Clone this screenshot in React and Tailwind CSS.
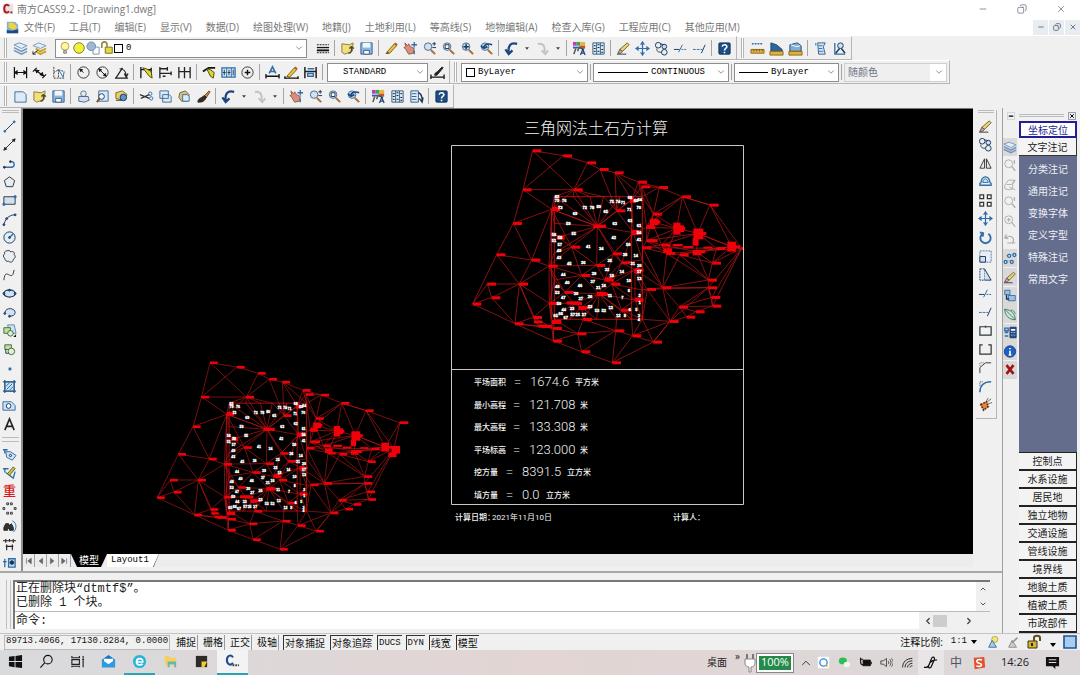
import { useState } from "react";
import { ChevronDown, ChevronUp, ChevronLeft, ChevronRight, Minus, X, Copy } from "lucide-react";

const NAVY = "#1c3557";
const BLUE = "#2f6ea8";
const PALE = "#cfe2f4";

const cjk = "font-['Open_Sans','Noto_Sans_CJK_SC',sans-serif]";
const mono = "font-['Liberation_Mono','Noto_Sans_CJK_SC',monospace]";

const lens = (
  <>
    <circle cx="6.5" cy="6" r="4" fill={PALE} stroke="#4a6788" />
    <path d="M9.5 9.5 14 14" stroke="#a8713f" strokeWidth="2.2" />
  </>
);

const pencil = (
  <>
    <path d="M3 12 11 3l2.5 2L6 13z" fill="#e9c63f" stroke="#7b5a1c" />
    <path d="M11 3l1-1.5 2.5 2-1 1.5z" fill="#b34a3a" stroke="none" />
  </>
);

// every drawing is on a 16 x 16 grid
const icons = {
  layers: <><path d="M1 4l6-2 8 3-6 3z" fill="#e4eef9" stroke="#6f93bb" /><path d="M1 7l8 4 6-3M1 10l8 4 6-3" stroke="#6f93bb" strokeWidth="1.6" /></>,
  layersEdit: <><path d="M1 5l6-3 8 3-6 3z" fill="#e4eef9" stroke="#7d99b5" /><path d="M4 8l5 3 6-3M4 11l5 3 6-3" stroke="#c6a52a" strokeWidth="2" /><path d="M1 14l5-4M1 14h3M1 14v-3" stroke="#222" /></>,
  bulb: <><circle cx="8" cy="6" r="4.5" fill="#fff6a0" stroke="#a39b40" /><path d="M6.5 11h3v3h-3z" fill="#ccc" stroke="#777" /></>,
  sun: <circle cx="8" cy="8" r="6" fill="#f5f03c" stroke="#6c7220" />,
  freeze: <><path d="M8 7h7v8H8z" fill="#fff" stroke="#6b8db0" /><circle cx="6" cy="6" r="5" fill="#9db8d0" stroke="#6c8ba8" /></>,
  unlock: <><path d="M6 7h8v7H6z" fill="#e3da3b" stroke="#6d691e" /><path d="M8 7V4a3 3 0 0 0-6 0v4" stroke="#8d8a2e" strokeWidth="1.8" /></>,
  linetype: <><path d="M2 4h13M2 12.500h13" stroke="#111" strokeDasharray="2 1" /><path d="M2 7h13" stroke="#111" strokeWidth="1.400" /><path d="M2 10h13" stroke="#111" strokeWidth="2" /></>,
  open: <><path d="M2 3l8 1 4-2-1 9-8 3-3-2z" fill="#f3df7d" stroke="#8b7a35" /><path d="M9 13c3 0 4-3 3-6M10 8l2-2 3 2" stroke="#4c4c2c" strokeWidth="1.500" /></>,
  save: <><path d="M2 2h12v12H2z" fill="#8fb8de" stroke="#345f8d" /><path d="M4 2h8v5H4z" fill="#f1f6fb" stroke="none" /><path d="M5 10h6v4H5z" fill="#fff" stroke="#345f8d" /></>,
  newFile: <path d="M2 3h9l3 3v8H2z" fill="#dcebf8" stroke="#3c6d99" />,
  matchprop: <><path d="M2 13c4 1 4-2 6-3" stroke="#7a4a1c" strokeWidth="1.500" />{pencil}</>,
  hand: <><path d="M2 2l3 3 1-2 2 3 4 2-1 5-5 1-3-5-2-2 2-1z" fill="#d88f80" stroke="#9b5548" /><path d="M12 1v6M9 4h6M12 10v4" stroke={BLUE} strokeWidth="1.400" /></>,
  zoomRt: <>{lens}<path d="M11 3h4M13 1v4M11 7h4" stroke={NAVY} /></>,
  zoomWin: <>{lens}<path d="M4.500 4h4v4h-4z" fill="#fff" stroke={NAVY} /></>,
  zoomAll: <>{lens}<path d="M6.500 3v6M3.500 6h6" stroke={NAVY} strokeWidth="1.600" /></>,
  zoomPrev: <>{lens}<path d="M5 8C5 4 9 2 14 4M5 8 2 5M5 8l4-2" stroke="#174a86" strokeWidth="1.800" /></>,
  undo: <path d="M14 3C7 1 4 5 5 13M1.500 9 5 14l4-4" stroke="#1c4680" strokeWidth="2.400" />,
  redo: <path d="M3 3c7-1 8 4 7 10M7 10l4 4 3-4" stroke="#c2c2c2" strokeWidth="2" />,
  props: <><path d="M1 1h4v4H1z" fill="#c43bb6" stroke="none" /><path d="M5 1h4v4H5z" fill="#36a853" stroke="none" /><path d="M9 1h5v4H9z" fill="#e2b93d" stroke="none" /><path d="M1 6h7v2H1z" fill="#2f5fbf" stroke="none" /><path d="M8 5h6v3H8z" fill="#c9502f" stroke="none" /><path d="M4 8l-2 6M7 8l-1 3M7 7l6 2" stroke="#555" strokeWidth="1.600" /><path d="M9 15l2.500-6 2.500 6M10 13h3" stroke="#1c4680" strokeWidth="1.300" /></>,
  grid: <><path d="M2 2h12v12H2z" fill="#e2eef9" stroke="#2c5c88" /><path d="M6 2v12M10 2v12" stroke="#2c5c88" /><path d="M3 5h2M3 8h2M3 11h2M7 4h2M7 7h2M7 11h2M11 5h2M11 9h2M11 12h2" stroke="#111" /></>,
  palette: <><path d="M2 2h8v12H2z" fill="#e2eef9" stroke="#2c5c88" /><path d="M3 5h5M3 8h5M3 11h5" stroke="#2c5c88" /><path d="M10 4c3 1 4 3 4 8M11 10l3 4 1-5" stroke={NAVY} strokeWidth="1.500" /></>,
  erase: <><path d="M4 9 12 2l2 2-7 7z" fill="#f0d56c" stroke="#665c38" /><path d="M4 9l3 2-2 2H2z" fill="#e4a4a4" stroke="#555" /><path d="M1 14h10" stroke="#333" /></>,
  move: <path d="M8 2v12M2 8h12M6 4l2-3 2 3M6 12l2 3 2-3M4 6 1 8l3 2M12 6l3 2-3 2" stroke={BLUE} strokeWidth="1.300" />,
  copyObj: <><circle cx="4.500" cy="4.500" r="3" fill="#e8eef4" /><circle cx="11" cy="6" r="2.500" fill={PALE} /><circle cx="11" cy="12" r="3" fill="#e8eef4" /><path d="M3 8c0 3 1 4 5 4M7 3l4 1" /></>,
  trim: <><path d="M1 9h6" stroke={NAVY} /><path d="M9 9h6" strokeDasharray="2 1" stroke={BLUE} /><path d="M6 12l4-8" stroke={BLUE} /></>,
  extend: <><path d="M1 9h10" strokeDasharray="3 1" stroke={BLUE} /><path d="M10 13l4-9" stroke={NAVY} /></>,
  help: <><rect x="2" y="2" width="12" height="12" rx="1" fill="#1d4d84" stroke="#0e3159" /><path d="M5.500 6C6 3 11 3.500 10.500 6.500 10 8 8 8 8 10M8 11.500v1.500" stroke="#fff" strokeWidth="1.700" /></>,
  dist: <><path d="M2 3h12" strokeDasharray="2 1" stroke={BLUE} strokeWidth="1.600" /><path d="M1 9h14v4H1z" fill="#e0b13e" stroke="#8b6719" /><path d="M4 9v2M7 9v2M10 9v2M13 9v2" stroke="#6e4d0c" /></>,
  area: <><path d="M2 2l6 2 6 5v2H2z" fill="#2d669b" stroke="#1b4a78" /><path d="M1 11h14v4H1z" fill="#e0b13e" stroke="#8b6719" /></>,
  massprop: <><path d="M2 4l8-2 4 3v6H2z" fill="#82aed4" stroke="#1b4a78" /><path d="M3 4l6 2 4-1" stroke="#fff" /><path d="M1 11h14v4H1z" fill="#e0b13e" stroke="#8b6719" /></>,
  list: <><path d="M5 2h8l-2 4 2 8H6z" fill="#d6e6f5" stroke="#345f8d" /><path d="M6 5h4M6 8h4M6 11h5M3 2v3" stroke={BLUE} /></>,
  locate: <><path d="M3 2v12h11" stroke={BLUE} strokeWidth="1.400" /><circle cx="9" cy="5" r="3" fill={PALE} /><path d="M8 8l-4 5M10 8l4 5" stroke={NAVY} strokeWidth="1.500" /></>,
  dimLin: <path d="M1.500 2v12M14.500 2v12M2 8h12M5 6 2 8l3 2M11 6l3 2-3 2" stroke="#111" strokeWidth="1.300" />,
  dimAli: <path d="M3 5l10 7M1 7l4-4M11 14l4-4M4 5.500l3 0.500-2 2zM12 11.500l-3-1 2-2z" fill="#111" stroke="#111" strokeWidth="1.300" />,
  dimOrd: <><path d="M3 2v12h11M3 8l5-3 6 2M8 5v8" stroke="#333" strokeDasharray="2 1" /><path d="M8 5l5 8 1-6" stroke={BLUE} /></>,
  radius: <><circle cx="8" cy="8" r="6" stroke="#333" /><path d="M8 8 4.500 5M4 4.500l3 0.500-2 2z" fill="#111" stroke="#111" /></>,
  diameter: <><circle cx="8" cy="8" r="6" stroke="#333" /><path d="M4 4l8 8M4 4l3 1-2 2zM12 12l-3-1 2-2z" fill="#111" stroke="#111" /></>,
  angle: <path d="M1 14h14M2 14 9 3M6 4c5 0 7 4 7 8M11 9l2 4 2-4" stroke="#222" strokeWidth="1.300" />,
  qdim: <><path d="M2 2v12M13 3v10M2 5h11" stroke="#111" strokeWidth="1.400" /><path d="M4 3l7 9 3 2-1-7-5-3z" fill="#e3d628" stroke="#4c4a14" /></>,
  dimBase: <path d="M2 2v12M2 4h8M2 9h12M10 2v4M14 7v4M5 12h3" stroke="#222" strokeWidth="1.400" />,
  dimCont: <path d="M2 2v12M8 2v12M14 2v12M2 7h12" stroke="#222" strokeWidth="1.400" />,
  qleader: <><path d="M1 7l6-4h7" stroke="#111" strokeWidth="2" /><path d="M5 4l4 8 3 2 1-6-4-3z" fill="#d9d530" stroke="#4c4a14" /></>,
  tolerance: <><path d="M1 3h14v10H1z" fill="#d9e8f5" stroke={BLUE} strokeWidth="1.400" /><path d="M6 3v10M11 3v10" stroke={BLUE} /><path d="M3.500 5v6M2 8h3M8.500 5v6M7 8h3M13 5v6" stroke={NAVY} /></>,
  center: <><circle cx="8" cy="8" r="6" stroke="#333" /><path d="M8 5v6M5 8h6" stroke="#111" strokeWidth="1.500" /></>,
  dimText: <><path d="M4.500 9 8 2l3.500 7M6 7h4" stroke={BLUE} strokeWidth="1.700" /><path d="M1 12h14M1 9.500v5M15 9.500v5" stroke="#111" strokeWidth="1.400" /></>,
  dimEdit: <>{pencil}<path d="M1 14h14M1 12v3M15 12v3" stroke="#111" strokeWidth="1.400" /></>,
  dimUpd: <><path d="M2 2v12M14 2v12M2 7h12" stroke="#222" strokeWidth="1.600" /><path d="M5 4h7M5 9h6v3H5z" stroke={BLUE} strokeWidth="1.500" /></>,
  dimStyle: <><path d="M1 13h14M1 10v5M15 10v5" stroke="#111" strokeWidth="1.400" /><path d="M5 11c0-3 2-3 3-4l5-5 1 1-5 6c-1 2-2 2-4 2z" fill="#222" stroke="#222" /></>,
  print: <><circle cx="8" cy="5" r="3" fill="#e2eaf4" stroke="#5b6f90" /><path d="M3 8h10l1 4-5 2-6-1z" fill="#d6dfee" stroke="#51648a" /></>,
  preview: <><path d="M4 2h10v11H4z" fill="#dcebf8" stroke="#3c6d99" /><circle cx="7" cy="8" r="3" fill="#f4f9fd" stroke={NAVY} /><path d="M5 10l-3 4" stroke="#80501f" strokeWidth="2" /></>,
  publish: <><path d="M2 4l7-2 5 4-5 6-7-2z" fill="#e8cf66" stroke="#7b6a2a" /><circle cx="10" cy="9" r="3.500" fill="#5d94c7" stroke={NAVY} /><path d="M2 12h6" stroke="#333" /></>,
  cut: <><circle cx="13" cy="10" r="1.800" stroke={BLUE} /><circle cx="12" cy="5" r="1.800" stroke={BLUE} /><path d="M1 6l10 4M2 10l9-4" stroke="#333" strokeWidth="1.300" /></>,
  copy: <path d="M2 2h9v8H2zM5 6h7l2 2v6H5z" fill="#dcebf8" stroke="#3c6d99" />,
  paste: <><path d="M3 4l6-2 4 4-2 7H5L2 9z" fill="#d6c181" stroke="#776633" /><path d="M6 6h5l2 2v5H6z" fill="#dcebf8" stroke="#3c6d99" /></>,
  brush: <><path d="M9 7l5-5 1 1-4 6z" fill="#c98a4b" stroke="#6e4420" /><path d="M2 14c0-3 2-4 4-5l3-2 2 2-2 3c-2 2-4 2-7 2z" fill="#3a2a20" stroke="#2a1c14" /></>,
  line: <><path d="M3 13 13 3" /><circle cx="3" cy="13" r="1" fill={BLUE} stroke={BLUE} /><circle cx="13" cy="3" r="1" fill={BLUE} stroke={BLUE} /></>,
  xline: <path d="M2 14 14 2M2 14l1-3 2 2zM14 2l-3 1 2 2z" fill="#222" stroke="#222" />,
  pline: <><path d="M2 12h8c4 0 4-6 0-6" stroke={BLUE} strokeWidth="1.400" /><circle cx="2.500" cy="12" r="1" fill={NAVY} /><circle cx="9" cy="6" r="1" fill={NAVY} /></>,
  polygon: <path d="M8 3l5.500 4-2 6.500h-7l-2-6.500z" fill="#e5edf4" stroke="#333" />,
  rect: <><path d="M2 4h12v8H2z" fill={PALE} stroke="#333" /><path d="M13 3h2v2h-2zM1 11h2v2H1z" fill={BLUE} stroke={BLUE} /></>,
  arc: <><path d="M2 14C3 8 7 3 14 3" /><circle cx="2" cy="13.500" r="1" fill={BLUE} /><circle cx="5" cy="7" r="1" fill={BLUE} /><circle cx="14" cy="3" r="1" fill={BLUE} /></>,
  circle: <><circle cx="8" cy="8" r="6" fill="#e2edf6" /><path d="M8 8l4-4" stroke={BLUE} strokeWidth="1.500" /><circle cx="8" cy="8" r="1" fill={BLUE} /></>,
  cloud: <path d="M5 2c2-1 4 0 4 1 3-1 5 1 4 3 2 2 1 4-1 5 0 3-3 4-5 2-2 1-4-1-4-3C1 9 1 6 3 5c-1-1 0-3 2-3z" fill="#e8eef3" stroke="#333" />,
  spline: <path d="M2 13c1-10 4-6 7-5s3-3 4-6" stroke="#333" />,
  ellipse: <><ellipse cx="8" cy="8" rx="6" ry="3.800" fill={PALE} strokeWidth="1.400" /><circle cx="2" cy="8" r="1" fill={BLUE} /><circle cx="8" cy="4.500" r="1" fill={BLUE} /><circle cx="14" cy="8" r="1" fill={BLUE} /></>,
  ellArc: <><path d="M3 8c1-6 11-5 11 0 0 3-3 4-6 4" fill={PALE} /><circle cx="3" cy="9" r="1" fill={BLUE} /><circle cx="8" cy="12" r="1" fill={BLUE} /></>,
  insert: <><path d="M6 2h7l2 9H8z" fill={PALE} stroke="#5d87ad" /><path d="M2 5h7v6H2z" fill="#c3deaa" stroke="#3c7030" /><circle cx="9" cy="11" r="3" fill="#dcead0" stroke="#3c6a30" /><path d="M15 15h-3l3-3z" fill="#111" stroke="none" /></>,
  block: <><path d="M3 3h7v5H3z" fill="#c3deaa" stroke="#3c7030" /><circle cx="10" cy="10" r="3.500" fill="#e2eeda" stroke="#3c6a30" /><path d="M4 8v4h3" /></>,
  point: <path d="M7 7h3v3H7z" fill={BLUE} stroke="none" />,
  hatch: <><path d="M3 3h10v10H3z" fill="#c9dff2" stroke={BLUE} /><path d="M1 3h14M1 13h14M3 1v14M13 1v14" stroke="#2b5984" strokeWidth="1.300" /><path d="M5 11l6-6M4 8l4-4M8 12l4-4" stroke={BLUE} /></>,
  region: <><path d="M1 4h9l4 4v5H1z" fill={PALE} stroke={BLUE} /><circle cx="7" cy="8.500" r="2.500" fill="#fff" stroke={NAVY} /></>,
  mtext: <path d="M3 14 8 2l5 12M5 10h6" stroke="#222" strokeWidth="1.700" />,
  tag: <><path d="M1 3h5M3 3v4" stroke={BLUE} strokeWidth="1.500" /><path d="M4 5h5l6 4-4 5-6-3z" fill={PALE} stroke={BLUE} /><circle cx="9" cy="9" r="1.200" /></>,
  tagEdit: <><path d="M1 4h6M3 4v4M4 8l8 6 2-7" stroke={BLUE} strokeWidth="1.400" /><path d="M6 9l6-7 2 2-6 7z" fill="#e4b93a" stroke="#3c6d30" /></>,
  ring: <path d="M5 2h2v2H5zM9 2h2v2H9zM13 7h2v2h-2zM9 12h2v2H9zM5 12h2v2H5zM1 7h2v2H1z" stroke="#333" />,
  find: <><path d="M2 9l2-4h3l1 2 2-2 2 4v3H8v-2H6v2H2z" fill="#333" stroke="#222" /><path d="M11 2c5 2 5 9 1 12" stroke={BLUE} /></>,
  span: <path d="M1 4h14M4 2v4M12 2v4M8 2v3M4 10h8M5 8v6M11 8v6" stroke="#222" strokeWidth="1.200" />,
  tb: <><path d="M1 7h4M3 4v9M7 4h7v9H7z" fill={PALE} stroke={BLUE} strokeWidth="1.400" /><circle cx="10.500" cy="8" r="2" fill={NAVY} /></>,
  mirror: <><path d="M7 3v10H2zM9 3v10h5z" fill="#e5edf4" stroke="#333" /></>,
  offset: <><path d="M2 12h12v-2c-2 0-1-2-2-4-2-4-6-4-8 0-1 2 0 4-2 4z" stroke={BLUE} strokeWidth="1.400" /><path d="M5 9h6c-1-5-5-5-6 0z" fill={PALE} stroke={BLUE} /></>,
  array: <path d="M2 2h4v4H2zM10 2h4v4h-4zM2 10h4v4H2zM10 10h4v4h-4z" fill="#eef3f7" stroke="#333" strokeWidth="1.300" />,
  rotate: <path d="M5 4a5.500 5.500 0 1 0 6 0M2 2.500 5.500 3.500 5 7" stroke={BLUE} strokeWidth="2" />,
  scale: <><path d="M2 2h12v12H2z" fill="#e6eff7" stroke="#54789a" strokeDasharray="2 1" /><path d="M2 8h6v6H2z" fill={PALE} /></>,
  stretch: <><path d="M2 2h5v12H2z" fill="#e6eff7" strokeDasharray="2 1" /><path d="M7 2l7 12H7" fill={PALE} /></>,
  brk: <path d="M2 4h12v9H2zM8 3v2" fill="#eef3f7" stroke="#333" strokeWidth="1.300" />,
  brk2: <path d="M5 3H2v10h12V3h-3" stroke="#333" strokeWidth="1.300" />,
  chamfer: <><path d="M2 14V8l6-5h6" stroke="#333" /><path d="M2 6V3h4" stroke={BLUE} strokeDasharray="1 1" /></>,
  fillet: <><path d="M2 14C2 7 6 3 14 3" stroke={BLUE} strokeWidth="1.600" /><path d="M2 7V3h4" stroke="#333" strokeDasharray="1 1" /></>,
  explode: <><path d="M3 8l6-3 2 5-5 4z" fill="#e08a42" stroke="#712c10" strokeDasharray="2 1" strokeWidth="1.800" /><path d="M10 5l4-3M11 7l4-1M9 4l2-3" stroke="#666" /></>,
  mail: <><path d="M1 6l7-5 7 5v8H1z" fill="#1277c5" stroke="none" /><path d="M3 5h10v3l-5 4-5-4z" fill="#fff" stroke="none" /><path d="M1 6l7 5 7-5v8H1z" fill="#2a9be4" stroke="none" /></>,
  gZoom: <><circle cx="6.500" cy="6" r="4.500" stroke="#aaa" /><path d="M10 9l4 5M13 2v4" stroke="#aaa" strokeWidth="1.500" /></>,
  gZoomIn: <><circle cx="6.500" cy="6" r="4.500" stroke="#aaa" /><path d="M10 9l4 5M6.500 4v4M4.500 6h4" stroke="#aaa" strokeWidth="1.300" /></>,
  gHand: <path d="M2 9l4-6h8l-3 5v5l-4 1-5-1zM4 8l6 0M10 8l3-5M7 11l7 3" stroke="#aaa" />,
  gUndo: <path d="M4 2 2 6l4 1M3 6c6-4 11 0 8 6M5 12h9" stroke="#aaa" strokeWidth="1.300" />,
  nodes: <><path d="M3 5l5-2 5 1M3 12l5-2 5 2" stroke="#9cb8d3" /><g fill="#fff" stroke={BLUE} strokeWidth="1.500"><circle cx="3" cy="12" r="1.700" /><circle cx="7" cy="5" r="1.700" /><circle cx="13" cy="4" r="1.700" /><circle cx="10" cy="12" r="1.700" /></g></>,
  swap: <><path d="M2 2h6v5H2zM6 8h8v6H6z" fill="#9fc0de" stroke={BLUE} /><path d="M4 7v5h3" stroke={NAVY} strokeWidth="1.500" /></>,
  leaf: <path d="M2 2c4 0 12 3 12 12C7 14 2 9 2 2zM2 2l12 12M9 3c3 0 4 2 5 4" fill="#cfe6d8" stroke="#33755c" />,
  calc: <><path d="M8 2h7v12H8z" fill="#234c93" stroke={NAVY} /><path d="M9 4h5v2H9z" fill="#fff" stroke="none" /><path d="M9 8h5M9 11h5" stroke="#cfe2f4" strokeDasharray="1 1" /><path d="M2 3h4v3H2zM2 8h4M2 12h4" stroke={BLUE} strokeWidth="1.500" /></>,
  info: <><circle cx="8" cy="8" r="6.500" fill="#1f5fc4" stroke="#123e87" /><path d="M8 4v1.500M8 7v5M6.500 12h3" stroke="#fff" strokeWidth="1.900" /></>,
  del: <path d="M4 3l8 10M12 3 4 13" stroke="#a01414" strokeWidth="3" />,
  person: <><circle cx="10" cy="5" r="3.500" fill="#f3e57a" stroke="#b6a63b" /><path d="M3 14l4-8 5 8z" fill="#a9c8e4" stroke={BLUE} /></>,
  personGray: <><path d="M3 14l4-8 5 8z" fill="#ccc" stroke="#888" /><path d="M7 9l6-6" stroke="#999" strokeWidth="2" /></>,
  lock: <><path d="M2 7h9v7H2z" fill="#d7b62e" stroke="#3d3510" /><path d="M8 7V4c0-3 6-3 6 0v3" stroke="#5a4e18" strokeWidth="2" /><path d="M6 9v3" stroke="#222" strokeWidth="2" /></>,
  screen: <path d="M2 2h12v12H2z" fill="#a9cdf0" stroke="#1f5390" strokeWidth="1.600" />,
  windows: <path d="M1 3l6-1v5.500H1zM8 2l7-1v6.500H8zM1 8.500h6V14l-6-1zM8 8.500h7V15l-7-1z" fill="#111" stroke="none" />,
  search: <><circle cx="9.500" cy="6" r="4.500" stroke="#111" strokeWidth="1.200" /><path d="M6 9.500 1.500 14.500" stroke="#111" strokeWidth="1.200" /></>,
  taskview: <path d="M2 2v2h8V2M2 6h8v5H2zM2 14v-1h8v1M14 2v3M14 7v7M13 6h2" stroke="#222" strokeWidth="1.200" />,
  edge: <><circle cx="8" cy="8" r="7" fill="#27b5dd" stroke="none" /><path d="M4.500 8.500h7C12 4 5 3.500 4.800 8.500c0 4 5 3.500 6.500 2" stroke="#fff" strokeWidth="1.800" /></>,
  folder: <><path d="M2 2h5l1 2h6v8H2z" fill="#f5cf62" stroke="none" /><path d="M5 8h9v6h-2v-3H7v3H5z" fill="#65b7a9" stroke="none" /></>,
  note: <><path d="M2 2h12v12H2z" fill="#2d2b2a" stroke="none" /><path d="M8 8h6l-3 6H8z" fill="#f2cc2c" stroke="none" /></>,
  cass: <><path d="M8.500 3.500C6 0 2 2 2 6.500s4 6.500 6.500 3" stroke="#1c4c94" strokeWidth="2.200" /><path d="M8 12h7" stroke="#444" strokeWidth="2" strokeDasharray="2 1" /></>,
  cassRed: <><rect x="1" y="1" width="14" height="14" fill="#f4dede" stroke="none" /><path d="M9.500 4C7 1 3 2 3 7.500S7 14 9.500 11" stroke="#a81a1e" strokeWidth="2.600" /><circle cx="12.500" cy="12.500" r="1.500" fill="#555" stroke="none" /></>,
  dwg: <><path d="M1 1h10l4 4v10H1z" fill="#7fb1da" stroke="none" /><path d="M3 2h6l5 5-4 4-7-3z" fill="#f0d23b" stroke="none" /><path d="M1 11l6 1 8-2v5H1z" fill="#1c4b83" stroke="none" /></>,
  qq: <><rect x="1" y="1" width="14" height="14" rx="1" fill="#fff" stroke="none" /><circle cx="8" cy="8" r="4.500" stroke="#2f8ee0" strokeWidth="1.700" /><path d="M11 11l2 2" stroke="#e8a93a" strokeWidth="2" /></>,
  wechat: <><ellipse cx="6" cy="6" rx="5" ry="4.200" fill="#2fbd58" stroke="none" /><ellipse cx="11" cy="10.500" rx="4" ry="3.300" fill="#eef6ee" stroke="none" /></>,
  power: <><path d="M5 5h9v7H5z" fill="#111" stroke="#111" /><path d="M15 7v3M1 4h4M2 2v5M2 7c0 3 1 4 3 4" stroke="#111" strokeWidth="1.400" /></>,
  sound: <path d="M1 6h3l4-3v10l-4-3H1zM10 6c1 1 1 3 0 4M12 4c2 2 2 6 0 8M14 3c3 3 3 7 0 10" stroke="#333" />,
  wifi: <path d="M2 14C2 7 7 3 14 3M5 14c0-5 4-8 9-8M8 14c0-3 3-5 6-5M11 14c0-1 1-2 3-2" stroke="#222" strokeWidth="1.200" />,
  pen: <path d="M1 13c3 1 5-1 6-4l2-5c1-3 4-2 3 1l-3 7c-1 3-4 2-3-1M8 8c2-3 5-2 7-3" stroke="#111" strokeWidth="1.300" />,
  sogou: <><path d="M2 2l12-1 1 12-12 2z" fill="#e3512b" stroke="none" /><path d="M11.500 4.500C8 3.500 5 4.500 5.500 6.500S11 8 11 10s-3 2.500-6 1.500" stroke="#fff" strokeWidth="1.800" /></>,
  chat: <><path d="M1 2h14v10h-4v3l-3-3H1z" fill="#111" stroke="none" /><path d="M4 5h8M4 8h8" stroke="#ddd" strokeWidth="1.200" /></>,
};

function Icon({ name, className = "size-[15px]" }) {
  return (
    <svg viewBox="0 0 16 16" fill="none" stroke={NAVY} className={className} aria-hidden="true">
      {icons[name]}
    </svg>
  );
}

function ToolButton({ name, active }) {
  return (
    <button
      type="button"
      aria-label={name}
      className={`flex h-[18px] w-[19px] shrink-0 items-center justify-center ${active ? "bg-[#d9d9d9]" : ""}`}
    >
      <Icon name={name} />
    </button>
  );
}

// "|" is a separator, "v" the small arrow beside undo and redo
function Tools({ items }) {
  return items.map((item, i) => {
    if (item === "|") return <span key={i} className="ml-0.5 mr-[3px] h-4 w-px shrink-0 bg-[#a5a5a5]" />;
    if (item === "v")
      return (
        <button key={i} type="button" aria-label="more" className="flex w-3 shrink-0 justify-center">
          <svg viewBox="0 0 6 4" className="h-[3px] w-1"><path d="M0 0h6L3 4z" fill="#444" /></svg>
        </button>
      );
    return <ToolButton key={i} name={item} />;
  });
}

function Grip() {
  return <span className="ml-1 mr-1 h-5 w-[3px] shrink-0 border-x border-[#b4b4b4] bg-white" />;
}

function Toolbar({ children }) {
  return <div className="flex h-6 shrink-0 items-center border-b border-r border-[#b5b5b5] border-t border-t-white pr-0.5">{children}</div>;
}

function Combo({ label, value, className, swatch, rule, children, disabled }) {
  return (
    <div className={`relative flex h-[19px] shrink-0 items-center border bg-white ${disabled ? "border-[#cfcfcf] text-gray-500" : "border-[#8c8c8c] text-black"} ${className}`}>
      {children}
      {swatch && <span className="ml-1 size-[9px] shrink-0 border border-black" />}
      {rule && <span className={`ml-1 h-px shrink-0 bg-black ${rule}`} />}
      <select
        aria-label={label}
        disabled={disabled}
        defaultValue={value}
        className={`h-full min-w-0 flex-1 appearance-none pl-[3px] opacity-100 ${disabled ? `mr-4 bg-[#efefef] text-[10px] ${cjk}` : `bg-transparent pt-0.5 text-[9px] ${mono}`}`}
      >
        <option>{value}</option>
      </select>
      <ChevronDown className="pointer-events-none absolute right-0.5 size-[10px] text-gray-600" strokeWidth={1.5} />
    </div>
  );
}

const nodes = [
  [248, 122], [340, 137], [412, 158], [450, 178], [495, 188], [565, 216], [575, 230], [628, 232], [697, 260], [780, 285],
  [875, 415], [372, 239], [219, 239], [190, 340], [140, 434], [68, 582], [112, 522], [125, 563], [208, 522], [245, 450],
  [195, 641], [310, 693], [395, 725], [487, 758], [610, 696], [548, 677], [497, 662], [383, 671], [305, 298], [442, 349],
  [297, 468], [298, 580], [250, 622], [265, 648], [310, 655], [660, 634], [710, 621], [738, 605], [688, 591], [788, 588],
  [785, 562], [775, 533], [775, 510], [787, 459], [638, 533], [592, 538], [610, 312], [605, 335], [680, 355], [743, 370],
  [845, 410], [590, 352], [550, 368], [555, 480], [555, 570], [400, 628], [590, 392], [578, 413], [650, 430], [690, 434],
  [740, 425], [800, 415], [635, 405], [500, 302], [365, 411], [490, 431], [440, 466], [515, 458], [395, 496], [465, 510],
  [485, 522], [448, 552], [345, 547], [370, 580], [395, 592], [515, 600], [325, 382], [545, 270], [313, 260], [577, 260],
  [577, 628], [313, 628], [313, 340], [313, 430], [313, 510], [577, 340], [577, 450], [577, 540], [370, 260], [420, 260],
  [460, 260], [510, 260], [360, 628], [440, 628], [500, 628], [545, 628],
];

// first number is the hub, the rest are the nodes it is joined to
const fans = [
  [0, 1, 11, 12], [1, 2, 12], [2, 3, 11], [3, 4, 11, 63], [4, 5, 63, 77, 79], [5, 6, 7, 77, 79],
  [6, 7, 46, 79, 77], [7, 8, 46, 79], [8, 9, 46, 47, 48, 49], [9, 10, 49, 50, 8], [10, 50, 60, 43, 41, 40, 39],
  [11, 12, 28, 78, 88, 89, 29, 90], [12, 13, 28], [13, 14, 28, 19], [14, 15, 19, 18], [15, 16, 17, 20],
  [16, 17, 18], [17, 18, 20], [18, 19, 30, 31, 20, 33, 32], [19, 28, 30], [20, 21, 32, 33, 34],
  [21, 22, 34, 27, 81, 31], [22, 23, 27, 26], [23, 24, 25, 26], [24, 25, 35, 80], [25, 26, 35, 80, 95],
  [26, 27, 94, 55], [27, 34, 81, 55], [28, 78, 82, 29, 64, 30], [30, 31, 64, 66, 68, 84, 83, 72],
  [31, 32, 34, 72, 73, 84, 81], [32, 33, 34], [33, 34], [35, 24, 36, 38, 44, 45, 80], [36, 37, 38],
  [37, 38, 39], [38, 44, 41, 39], [39, 40, 41], [40, 41, 38], [41, 42, 44, 45, 35], [42, 43, 44, 58, 60, 59],
  [43, 60, 59, 61, 50], [44, 45, 57, 58, 59, 86, 53], [45, 53, 54, 87, 80], [46, 47, 51, 79, 48], [47, 51, 48, 56, 62],
  [48, 49, 56, 62, 51, 58], [49, 50, 60, 62, 61], [50, 60, 61, 49], [51, 52, 56, 79], [56, 57, 62, 58, 49], [57, 62, 58, 86, 61],
  [58, 59, 60, 62], [59, 60], [60, 61, 62], [29, 28, 82, 76, 64, 88, 89, 90, 91, 78, 63, 77, 52, 65, 66, 67, 83],
  [63, 77, 52, 90, 91], [52, 65, 67, 85, 86, 77], [64, 66, 83, 68, 76], [65, 66, 67, 69, 52], [66, 68, 69],
  [67, 53, 69, 70, 86], [68, 69, 71, 72, 84], [69, 70, 71, 53], [70, 71, 53, 54, 75, 87],
  [71, 72, 73, 74, 75, 93, 94, 95, 55, 54], [72, 73, 84], [73, 74, 92, 81], [74, 55, 92, 93], [75, 54, 94, 95, 80], [53, 87, 54], [54, 80, 87],
];

const edgePath = (list) =>
  list.flatMap(([hub, ...ends]) => ends.map((n) => `M${nodes[hub]}L${nodes[n]}`)).join("");

const redExtra = [
  [600, 326, 26, 20], [670, 338, 22, 36], [682, 346, 20, 20], [730, 356, 30, 32], [728, 385, 18, 22], [728, 420, 26, 16],
  [832, 395, 26, 30], [590, 345, 22, 12], [640, 415, 26, 14], [668, 402, 30, 7], [700, 408, 30, 7], [760, 410, 28, 6], [595, 388, 28, 8],
  [306, 630, 28, 12], [252, 632, 26, 8], [275, 645, 30, 9], [306, 290, 22, 13], [430, 344, 38, 10], [320, 376, 24, 13],
  [545, 360, 24, 15], [553, 474, 16, 16], [440, 546, 28, 12], [465, 502, 22, 11], [350, 574, 34, 10], [385, 588, 24, 12], [555, 564, 22, 12], [540, 265, 18, 14],
];

const heights = `321 260 82;321 271 79;343 270 76;331 291 73;404 291 72;426 291 78;446 290 80;375 310 69;467 303 65;485 275 75;504 275 74;519 278 71;540 263 68;558 272 60;569 269 64;538 297 71;566 293 70;355 341 59;494 341 63;540 330 62;567 346 61;371 371 55;491 381 42;567 367 54;567 387 41;312 372 56;312 391 51;330 382 58;329 402 57;327 422 49;327 442 43;415 409 41;454 414 34;535 402 50;525 433 38;557 437 14;358 460 45;400 457 36;479 452 35;548 459 31;568 465 20;568 485 17;568 505 13;471 478 32;515 485 14;485 495 18;340 493 44;352 516 40;390 525 46;428 513 37;432 490 39;461 525 16;445 531 21;536 510 10;537 542 8;322 528 48;322 548 53;378 551 30;340 563 47;392 566 27;420 558 26;480 556 11;517 563 7;569 555 2;569 576 1;327 580 50;341 597 44;366 594 33;420 590 23;441 601 53;461 601 52;482 591 12;540 598 6;559 597 5;317 617 65;332 611 66;347 621 67;368 612 57;383 614 25;402 614 27;505 617 12;525 617 8;567 615 3;567 627 4`
  .split(";")
  .map((row) => row.split(" "));

function Mesh({ transform, tail }) {
  return (
    <g transform={transform}>
      <path d={edgePath(fans)} stroke="#b81616" strokeWidth="2.200" fill="none" />
      <path d="M313 260H577V628H313zM305 300V628M545 260V628" stroke="#e01010" strokeWidth="2.400" fill="none" />
      {tail && <path d="M780 285L895 327L875 415M895 327L845 410" stroke="#c81414" strokeWidth="2.200" fill="none" />}
      <g fill="#f00008">
        {nodes.slice(0, 76).map(([x, y], i) => (
          <rect key={i} x={x} y={y - 4} width={i === 10 ? 6 : 26} height="9" />
        ))}
        {redExtra.map(([x, y, w, h], i) => (
          <rect key={i} x={x} y={y} width={w} height={h} />
        ))}
        {tail && <rect x="894" y="322" width="30" height="9" />}
        {tail && <rect x="868" y="406" width="28" height="26" />}
        {tail && <rect x="856" y="428" width="28" height="16" />}
      </g>
      <g fill="#fff" stroke="#fff" strokeWidth="1" fontSize="12" fontWeight="700" textAnchor="middle" fontFamily="Liberation Sans, sans-serif">
        {heights.map(([x, y, t]) => (
          <text key={`${x}-${y}`} x={x} y={Number(y) + 5}>{t}</text>
        ))}
      </g>
    </g>
  );
}

const results = [
  ["平场面积", "1674.6", "平方米", 491, 507, 552],
  ["最小高程", "121.708", "米", 490, 506, 557],
  ["最大高程", "133.308", "米", 490, 506, 557],
  ["平场标高", "123.000", "米", 490, 506, 557],
  ["挖方量", "8391.5", "立方米", 483, 499, 544],
  ["填方量", "0.0", "立方米", 483, 499, 523],
];

function Drawing() {
  return (
    <svg viewBox="0 0 950 445" preserveAspectRatio="xMinYMin meet" className="block size-full" role="img" aria-label="三角网法土石方计算">
      <Mesh transform="translate(427 1) scale(.3333)" />
      <Mesh transform="translate(114.300 217.900) scale(.2933)" tail />
      <g fill="#f2f2f2" fontFamily="Roboto, 'Noto Sans CJK SC', sans-serif" fontWeight="300">
        <text x="501" y="25" fontSize="16">三角网法土石方计算</text>
        {results.map(([name, value, unit, eq, vx, ux], i) => {
          const y = 276 + Math.round(i * 22.5);
          return (
            <g key={name}>
              <text x="451" y={y} fontSize="8" fontWeight="500">{name}</text>
              <text x={eq} y={y + 1} fontSize="13">=</text>
              <text x={vx} y={y + 1} fontSize="13">{value}</text>
              <text x={ux} y={y} fontSize="8" fontWeight="500">{unit}</text>
            </g>
          );
        })}
        <text x="432" y="411" fontSize="8" fontWeight="500">计算日期：</text>
        <text x="469" y="411" fontSize="8" fontWeight="400">2021年11月10日</text>
        <text x="650" y="411" fontSize="8" fontWeight="500">计算人：</text>
      </g>
      <path d="M428.500 36.500H720.500V395.500H428.500zM428.500 260.500H720.500" fill="none" stroke="#c8c8c8" />
    </svg>
  );
}

const menus = ["文件(F)", "工具(T)", "编辑(E)", "显示(V)", "数据(D)", "绘图处理(W)", "地籍(J)", "土地利用(L)", "等高线(S)", "地物编辑(A)", "检查入库(G)", "工程应用(C)", "其他应用(M)"];
const drawTools = ["line", "xline", "pline", "polygon", "rect", "arc", "circle", "cloud", "spline", "ellipse", "ellArc", "insert", "block", "point", "hatch", "region", "mtext"];
const modifyTools = ["erase", "copyObj", "mirror", "offset", "array", "move", "rotate", "scale", "stretch", "trim", "extend", "brk", "brk2", "chamfer", "fillet", "explode"];
const sideTools = ["layers", "gZoom", "gHand", "gZoom", "gZoomIn", "gUndo", "nodes", "erase", "swap", "leaf", "calc", "info", "del"];
const notes = ["分类注记", "通用注记", "变换字体", "定义字型", "特殊注记", "常用文字"];
const categories = ["控制点", "水系设施", "居民地", "独立地物", "交通设施", "管线设施", "境界线", "地貌土质", "植被土质", "市政部件"];
const modes = ["捕捉", "栅格", "正交", "极轴", "对象捕捉", "对象追踪", "DUCS", "DYN", "线宽", "模型"];

function Header() {
  return (
    <header className="bg-white text-[#777]">
      <div className="flex h-[18px] items-center pl-0.5">
        <Icon name="cassRed" className="size-3" />
        <h1 className="ml-[3px] text-[10px] leading-[18px]">南方CASS9.2 - [Drawing1.dwg]</h1>
        <div className="ml-auto flex items-center text-gray-600">
          {[Minus, Copy, X].map((I, i) => (
            <button key={i} type="button" aria-label="window" className="flex w-[39px] justify-center">
              <I className="size-[10px] -scale-x-100" strokeWidth={1.5} />
            </button>
          ))}
        </div>
      </div>
      <nav className="flex h-[18px] items-center pl-1.5">
        <Icon name="dwg" className="size-[13px]" />
        <div className="ml-[5px] flex gap-[14px]">
          {menus.map((m) => (
            <button key={m} type="button" className="whitespace-nowrap text-[10px] leading-[18px]">{m}</button>
          ))}
        </div>
        <div className="ml-auto flex gap-px text-[#6d7c90]">
          {[Minus, Copy, X].map((I, i) => (
            <button key={i} type="button" aria-label="drawing window" className="flex h-[15px] w-[15px] items-center justify-center bg-[#e9ecf0]">
              <I className="size-2 -scale-x-100" strokeWidth={3} />
            </button>
          ))}
        </div>
      </nav>
    </header>
  );
}

function Toolbars() {
  return (
    <div className="shrink-0">
      <div className="flex h-6">
        <Toolbar>
          <Grip />
          <Tools items={["layers", "layersEdit"]} />
          <Combo label="图层" value="0" className="ml-1.5 mr-1.5 w-[252px] pl-0.5">
            {["bulb", "sun", "freeze", "unlock"].map((n) => <Icon key={n} name={n} className="size-[14px] shrink-0" />)}
            <span className="size-[9px] border border-black" />
          </Combo>
          <Tools items={["linetype", "|", "open", "save", "|", "matchprop", "hand", "zoomRt", "zoomWin", "zoomAll", "zoomPrev", "|", "undo", "v", "redo", "v", "|", "props", "grid", "|", "erase", "move", "copyObj", "trim", "extend", "|", "help"]} />
        </Toolbar>
        <Toolbar>
          <Grip />
          <Tools items={["dist", "area", "massprop", "|", "list", "locate"]} />
        </Toolbar>
      </div>
      <div className="flex h-6">
        <Toolbar>
          <Grip />
          <Tools items={["dimLin", "dimAli", "dimOrd", "|", "radius", "diameter", "angle", "|", "qdim", "dimBase", "dimCont", "|", "qleader", "tolerance", "center", "|", "dimText", "dimEdit", "dimUpd", "|"]} />
          <Combo label="标注样式" value="STANDARD" className="ml-px w-[101px] pl-3" />
          <ToolButton name="dimStyle" />
        </Toolbar>
        <Toolbar>
          <Grip />
          <Combo label="颜色" value="ByLayer" swatch className="w-[127px]" />
          <span className="mx-0.5 h-4 w-px bg-[#a5a5a5]" />
          <Combo label="线型" value="CONTINUOUS" rule="w-[50px]" className="w-[136px]" />
          <span className="mx-0.5 h-4 w-px bg-[#a5a5a5]" />
          <Combo label="线宽" value="ByLayer" rule="w-[29px]" className="w-[105px]" />
          <span className="mx-0.5 h-4 w-px bg-[#a5a5a5]" />
          <Combo label="打印样式" value="随颜色" className="w-[103px]" disabled />
        </Toolbar>
      </div>
      <div className="flex h-6">
        <Toolbar>
          <Grip />
          <Tools items={["newFile", "open", "save", "|", "print", "preview", "publish", "|", "cut", "copy", "paste", "brush", "|", "undo", "v", "redo", "v", "|", "hand", "zoomRt", "zoomWin", "zoomPrev", "|", "props", "grid", "palette", "|", "help"]} />
        </Toolbar>
      </div>
    </div>
  );
}

function LayoutTabs() {
  return (
    <div className="flex h-[13px] shrink-0 items-stretch bg-[#ececec] text-[9px] leading-[13px]">
      {["M5 1v8M4 5l0 0M12 1v8L7 5z", "M11 1v8L6 5z", "M5 1v8l5-4z", "M4 1v8l5-4zM11 1v8"].map((d) => (
        <button key={d} type="button" aria-label="tab scroll" className="flex w-3 items-center justify-center border-r border-gray-400">
          <svg viewBox="0 0 16 10" className="h-2 w-3"><path d={d} fill="#666" stroke="#666" /></svg>
        </button>
      ))}
      <button type="button" className={`bg-black px-2 text-[10px] text-white [clip-path:polygon(0_0,100%_0,calc(100%-6px)_100%,6px_100%)] ${cjk}`}>模型</button>
      <button type="button" className={`bg-white pl-1 pr-[10px] text-black [clip-path:polygon(0_0,100%_0,calc(100%-6px)_100%,0_100%)] ${mono}`}>Layout1</button>
      <svg viewBox="0 0 8 13" className="-ml-2 h-full w-2"><path d="M7.500 0 2 13" stroke="#333" /></svg>
    </div>
  );
}

function CommandLine() {
  const [command, setCommand] = useState("");
  return (
    <div className="flex h-[62px] shrink-0 border-t-2 border-[#a9a9a9] bg-[#f0f0f0] pb-1 pt-[7px]">
      <span className="ml-1.5 mr-0.5 w-[5px] border-x border-[#c0c0c0]" />
      <div className={`mr-3 flex min-w-0 flex-1 flex-col border-l-2 border-t-2 border-[#777] bg-white text-[12px] text-[#222] ${mono}`}>
        <div className="flex flex-1">
          <div className="flex-1 pl-px leading-[14px]">
            <p>正在删除块“dtmtf$”。</p>
            <p>已删除 1 个块。</p>
          </div>
          <div className="flex w-[14px] flex-col items-center justify-around bg-[#f0f0f0] text-gray-600">
            <ChevronUp className="size-2" strokeWidth={3} />
            <ChevronDown className="size-2" strokeWidth={3} />
          </div>
        </div>
        <div className="flex h-[18px] items-center border-t border-[#bbb]">
          <label htmlFor="command" className="pl-px leading-4">命令:</label>
          <input id="command" value={command} onChange={(e) => setCommand(e.target.value)} className="h-4 min-w-0 flex-1 pl-1 outline-none" />
          <div className="flex h-full w-[71px] items-center bg-[#f0f0f0] text-gray-700">
            <ChevronLeft className="ml-1 size-2.5" strokeWidth={3} />
            <span className="h-3 w-[14px] bg-[#cdcdcd]" />
            <ChevronRight className="ml-auto mr-4 size-2.5" strokeWidth={3} />
          </div>
        </div>
      </div>
    </div>
  );
}

function Dock() {
  return (
    <aside className="flex w-[78px] shrink-0 flex-col border-l border-[#a0a0a0] pt-0.5">
      <div className="flex h-[11px] items-center gap-1 pl-1 pr-1">
        <button type="button" aria-label="收起" className="flex size-2 items-center justify-center border border-gray-300"><Minus className="size-1.5 text-black" strokeWidth={5} /></button>
        <span className="h-[3px] flex-1 border-y border-[#bbb]" />
        <button type="button" aria-label="关闭" className="flex size-2 items-center justify-center border border-gray-400"><X className="size-2 text-black" strokeWidth={4} /></button>
      </div>
      <div className="flex flex-1">
        <div className="mr-0.5 flex h-[258px] w-[14px] shrink-0 flex-col justify-between pt-[17px] [&>button]:w-[14px]">
          {sideTools.map((n, i) => <ToolButton key={i} name={n} active={i === 0 || i > 5} />)}
        </div>
        <div className="mr-[3px] flex flex-1 flex-col text-[10px] text-[#1c1c1c]">
          <button type="button" className="h-[17px] border-2 border-[#241d96] bg-white leading-3 text-[#241d96]">坐标定位</button>
          <button type="button" className="h-[18px] border-b border-r border-[#333] bg-[#f4f4f4] leading-4">文字注记</button>
          <div className="flex flex-1 flex-col bg-[#656d8d] pt-0.5 text-[#eef0f6]">
            {notes.map((n) => <button key={n} type="button" className="h-[22px]">{n}</button>)}
          </div>
          <div className="mb-[3px] flex h-[178px] flex-col border-t border-[#222]">
            {categories.map((c) => (
              <button key={c} type="button" className="flex-1 border-b-2 border-r border-[#222] bg-[#f3f3f3] leading-4">{c}</button>
            ))}
          </div>
        </div>
      </div>
    </aside>
  );
}

function StatusBar() {
  return (
    <div className="flex h-[17px] shrink-0 items-center border-t border-[#c4c4c4] bg-[#f0f0f0] pl-1 text-[10px] text-[#111]">
      <output className={`flex h-[15px] w-[166px] items-center border border-[#b9b9b9] pl-px text-[9px] ${mono}`}>
        <span className="whitespace-pre">89713.4066, 17130.8284, 0.0000</span>
      </output>
      <div className="ml-[5px] flex gap-1">
        {modes.map((m, i) => (
          <button
            key={m}
            type="button"
            aria-pressed={i > 3}
            className={`h-[15px] whitespace-nowrap pl-px pr-px leading-[14px] ${i > 3 ? "border-l border-t border-[#333]" : "border-r border-[#999] pr-0.5"} ${m[0] === "D" ? `text-[9px] ${mono}` : ""}`}
          >
            {m}
          </button>
        ))}
      </div>
      <div className="ml-auto flex items-center">
        <span>注释比例:</span>
        <button type="button" className={`ml-2 flex items-center gap-1 text-[9px] ${mono}`}>
          1:1<svg viewBox="0 0 6 4" className="h-1 w-1.5"><path d="M0 0h6L3 4z" /></svg>
        </button>
        <Icon name="person" className="ml-[9px] size-[14px]" />
        <Icon name="personGray" className="ml-1.5 size-[14px]" />
        <Icon name="lock" className="ml-1.5 size-4" />
        <svg viewBox="0 0 6 4" className="ml-2 mt-1.5 h-1 w-1.5"><path d="M0 0h6L3 4z" /></svg>
        <Icon name="screen" className="ml-1.5 mr-0.5 size-4" />
      </div>
    </div>
  );
}

function Taskbar() {
  return (
    <footer className="flex h-[25px] shrink-0 items-center bg-linear-to-r from-[#d9dadd] via-[#e2d5d3] to-[#dcd8da] text-[10px] text-[#222]">
      {["windows", "search", "taskview", "mail", "edge", "folder", "note", "cass"].map((n) => (
        <button
          key={n}
          type="button"
          aria-label={n}
          className={`flex h-full w-[31px] items-center justify-center border-b-2 ${n === "cass" ? "border-[#28a5b5] bg-[#f3f3f4]" : n === "edge" ? "border-[#28a5b5]" : "border-transparent"}`}
        >
          <Icon name={n} className="size-[15px]" />
        </button>
      ))}
      <div className="ml-auto flex h-full items-center pr-5">
        <span>桌面</span>
        <span className="ml-2 mb-3">»</span>
        <svg viewBox="0 0 12 20" className="ml-1 h-5 w-3"><path d="M3 1v5M9 1v5" stroke="#777" strokeWidth="2" /><path d="M1 6h10v4c0 3-2 4-4 4v5H5v-5c-2 0-4-1-4-4z" fill="#fff" stroke="#888" /></svg>
        <span className="ml-px flex h-[18px] w-9 items-center justify-center border-2 border-white bg-[#238a49] text-[11px] text-white outline outline-[#888]">100%</span>
        <ChevronUp className="ml-1.5 size-[14px]" strokeWidth={1.5} />
        {["qq", "wechat", "power", "sound", "wifi"].map((n) => (
          <span key={n} className="flex w-[21px] justify-center"><Icon name={n} className="size-[13px]" /></span>
        ))}
        <span className="flex h-full w-[26px] items-center justify-center bg-[#e9e5e6]"><Icon name="pen" className="size-[15px]" /></span>
        <span className="w-6 text-center text-[12px] leading-4 text-gray-600">中</span>
        <Icon name="sogou" className="ml-1 size-[14px]" />
        <time className="ml-[15px] text-[11px]">14:26</time>
        <Icon name="chat" className="ml-4 size-[15px]" />
      </div>
    </footer>
  );
}

export default function App() {
  return (
    <div className={`flex min-h-screen flex-col overflow-hidden bg-[#f0f0f0] ${cjk}`}>
      <Header />
      <Toolbars />
      <div className="flex flex-1">
        <main className="flex min-w-0 flex-1 flex-col">
          <div className="flex flex-1">
            <div className="flex w-[23px] shrink-0 flex-col border-r-2 border-[#8e8e8e]">
              <span className="mx-0.5 mt-0.5 h-[3px] border-y border-[#bbb]" />
              <div className="mt-1 flex h-[316px] flex-col justify-between">
                {drawTools.map((n) => <ToolButton key={n} name={n} />)}
              </div>
              <span className="mx-0.5 mt-1 h-[5px] border-y border-[#bbb]" />
              <div className="mt-1 flex h-[125px] flex-col justify-between [&>button]:h-[17px]">
                <ToolButton name="tag" />
                <ToolButton name="tagEdit" />
                <button type="button" className="w-[19px] text-[13px] font-medium leading-[17px] text-[#e01818]">重</button>
                {["ring", "find", "span", "tb"].map((n) => <ToolButton key={n} name={n} />)}
              </div>
            </div>
            <div className="flex min-w-0 flex-1 flex-col">
              <div className="min-h-0 flex-1 border-t border-[#777] bg-black">
                <Drawing />
              </div>
              <LayoutTabs />
              <div className="h-1" />
            </div>
            <div className="w-[29px] shrink-0 pl-[3px] pt-0.5">
              <div className="flex w-[21px] flex-col border-b border-r border-[#b5b5b5] pb-1">
                <span className="mx-0.5 h-[3px] border-y border-[#bbb]" />
                <div className="mt-1 flex h-[297px] flex-col justify-between">
                  {modifyTools.map((n) => <ToolButton key={n} name={n} />)}
                </div>
              </div>
            </div>
          </div>
          <CommandLine />
        </main>
        <Dock />
      </div>
      <StatusBar />
      <Taskbar />
    </div>
  );
}
